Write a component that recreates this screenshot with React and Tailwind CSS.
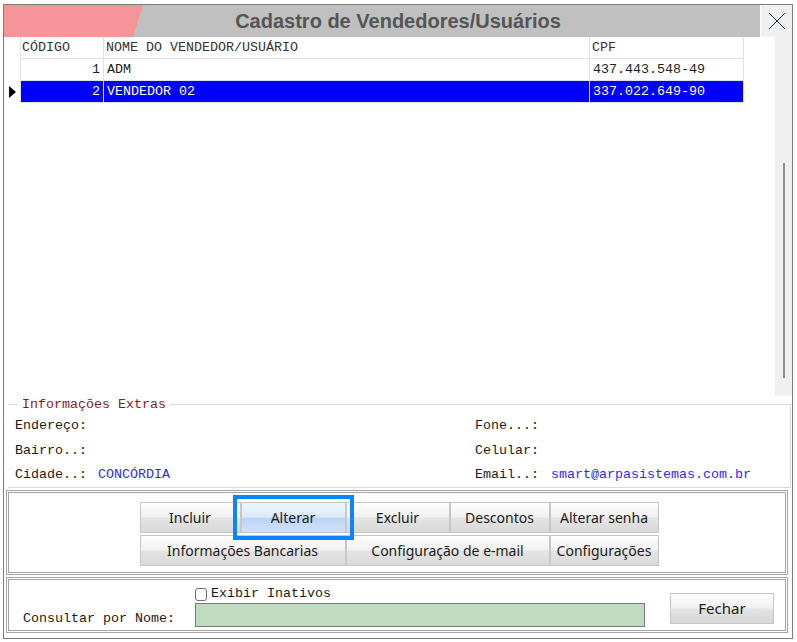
import React from 'react';

const mono = "font-['Liberation_Mono','Courier_New',monospace]";
const ui = "font-['Noto_Sans','Open_Sans',sans-serif]";

const rows = [
    { id: 1, nome: 'ADM', cpf: '437.443.548-49' },
    { id: 2, nome: 'VENDEDOR 02', cpf: '337.022.649-90', selected: true },
];

function WinButton({ children, width, active }) {
    return (
        <button
            type="button"
            className={`h-[31px] ${width} border border-[#c6c6c6] text-[14px] text-[#1b1b1b] ${ui} ${
                active
                    ? 'bg-[linear-gradient(#edf5fc,#dcebf8_48%,#bcd5f4_52%,#cfe0f7)]'
                    : 'bg-[linear-gradient(#fdfdfd,#f1f1f1_48%,#e4e4e4_52%,#d9d9d9)]'
            }`}
        >
            {children}
        </button>
    );
}

export default function App() {
    return (
        <div className="h-[642px] w-[797px] bg-white pb-[3px] pl-[3px] pr-[4px] pt-[4px]">
            <div className="flex h-full flex-col border border-[#7d7d7d] bg-white">
                {/* title bar */}
                <div className="relative flex h-[32px] items-center justify-center bg-[#c0c0c0]">
                    <div className="absolute left-0 top-0 h-full w-[139px] bg-[#f5959a] [clip-path:polygon(0_0,100%_0,calc(100%-10px)_100%,0_100%)]" />
                    <span className="relative text-[20px] font-bold text-[#555555] font-['Liberation_Sans',Arial,sans-serif]">
                        Cadastro de Vendedores/Usuários
                    </span>
                    <div className="absolute right-0 top-0 flex h-full w-[32px] items-center justify-center border-l border-white bg-[#f0f0f0]">
                        <svg width="18" height="18" viewBox="0 0 18 18">
                            <path d="M1 1L17 17M17 1L1 17" stroke="#1d3163" strokeWidth="1" fill="none" />
                        </svg>
                    </div>
                </div>

                {/* grid */}
                <div className="flex h-[359px]">
                    <div className={`flex-1 text-[13.33px] text-[#1e1e1e] ${mono}`}>
                        <div className="flex h-[22px]">
                            <div className="w-[16px]" />
                            <div className="flex w-[83px] items-center border-b border-l border-[#e2e2e2] pl-[1px] text-[#333]">
                                CÓDIGO
                            </div>
                            <div className="flex w-[486px] items-center border-b border-l border-[#e2e2e2] pl-[2px] text-[#333]">
                                NOME DO VENDEDOR/USUÁRIO
                            </div>
                            <div className="flex w-[155px] items-center border-b border-l border-r border-[#e2e2e2] pl-[2px] text-[#333]">
                                CPF
                            </div>
                        </div>
                        {rows.map((row) => (
                            <div key={row.id} className="flex h-[22px]">
                                <div className="flex w-[16px] items-center pl-[5px]">
                                    {row.selected && (
                                        <svg width="7" height="12" viewBox="0 0 7 12">
                                            <path d="M0 0L7 6L0 12Z" fill="#000" />
                                        </svg>
                                    )}
                                </div>
                                <div
                                    className={`flex w-[83px] items-center justify-end border-b border-l border-[#e2e2e2] pr-[3px] ${
                                        row.selected ? 'bg-[#0000ff] text-white' : ''
                                    }`}
                                >
                                    {row.id}
                                </div>
                                <div
                                    className={`flex w-[486px] items-center border-b border-l border-[#e2e2e2] pl-[3px] ${
                                        row.selected ? 'bg-[#0000ff] text-white' : ''
                                    }`}
                                >
                                    {row.nome}
                                </div>
                                <div
                                    className={`flex w-[155px] items-center border-b border-l border-r border-[#e2e2e2] pl-[3px] ${
                                        row.selected ? 'bg-[#0000ff] text-white' : ''
                                    }`}
                                >
                                    {row.cpf}
                                </div>
                            </div>
                        ))}
                    </div>
                    <div className="flex w-[17px] justify-center bg-[#f0f0f0] pt-[126px]">
                        <div className="h-[215px] w-[2px] bg-[#8f8f8f]" />
                    </div>
                </div>

                {/* informações extras */}
                <fieldset className={`ml-[4px] mr-[1px] mt-[1px] border-b border-r border-t border-[#d9d9d9] pl-[7px] text-[13.33px] text-[#1a1a1a] ${mono}`}>
                    <legend className="ml-[3px] px-[4px] leading-[15px] text-[#8b1a1a]">Informações Extras</legend>
                    <div className="grid grid-cols-[460px_1fr] pt-[1px]">
                        <div>
                            <div className="flex h-[25px] items-center">Endereço:</div>
                            <div className="flex h-[25px] items-center">Bairro..:</div>
                            <div className="flex h-[24px] items-center">
                                <span className="w-[83px]">Cidade..:</span>
                                <span className="text-[#2b2bff]">CONCÓRDIA</span>
                            </div>
                        </div>
                        <div>
                            <div className="flex h-[25px] items-center">Fone...:</div>
                            <div className="flex h-[25px] items-center">Celular:</div>
                            <div className="flex h-[24px] items-center">
                                <span className="w-[76px]">Email..:</span>
                                <span className="text-[#2b2bff]">smart@arpasistemas.com.br</span>
                            </div>
                        </div>
                    </div>
                </fieldset>

                {/* botões */}
                <div className="ml-[2px] mr-[4px] mt-[2px] flex flex-col items-center gap-[2px] border-[3px] border-double border-[#a4a4a4] pb-[6px] pl-[4px] pt-[9px]">
                    <div className="relative flex">
                        <WinButton width="w-[101px]">Incluir</WinButton>
                        <WinButton width="w-[105px]" active>
                            Alterar
                        </WinButton>
                        <WinButton width="w-[104px]">Excluir</WinButton>
                        <WinButton width="w-[100px]">Descontos</WinButton>
                        <WinButton width="w-[109px]">Alterar senha</WinButton>
                        <div className="pointer-events-none absolute left-[93px] top-[-7px] h-[45px] w-[121px] border-[4px] border-[#0a84ff]" />
                    </div>
                    <div className="flex">
                        <WinButton width="w-[206px]">Informações Bancarias</WinButton>
                        <WinButton width="w-[204px]">Configuração de e-mail</WinButton>
                        <WinButton width="w-[109px]">Configurações</WinButton>
                    </div>
                </div>

                {/* consulta */}
                <div className={`ml-[2px] mr-[4px] mt-[2px] flex border-[3px] border-double border-[#a4a4a4] pb-[3px] pt-[5px] text-[13.33px] text-[#1a1a1a] ${mono}`}>
                    <div className="grid grid-cols-[186px_450px]">
                        <div />
                        <label className="flex h-[18px] items-center gap-[4px]">
                            <span className="h-[13px] w-[12px] rounded-[3px] border border-[#6e6e6e] bg-white" />
                            Exibir Inativos
                        </label>
                        <div className="flex items-end pb-[2px] pl-[14px] leading-none">Consultar por Nome:</div>
                        <div className="h-[24px] border border-[#7a7a7a] bg-[#c0dcc0]" />
                    </div>
                    <button
                        type="button"
                        className={`ml-[25px] mt-[8px] h-[31px] w-[104px] border border-[#c6c6c6] bg-[linear-gradient(#fdfdfd,#f1f1f1_48%,#e4e4e4_52%,#d6d6d6)] text-[15px] text-[#1b1b1b] ${ui}`}
                    >
                        Fechar
                    </button>
                </div>
            </div>
        </div>
    );
}
